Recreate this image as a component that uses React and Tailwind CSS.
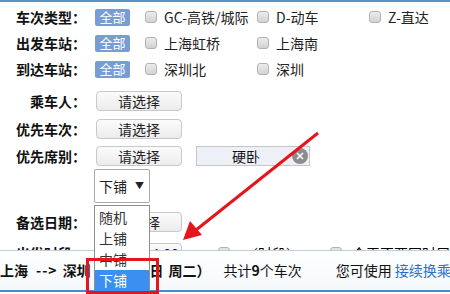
import React from 'react'

const font = { fontFamily: '"Noto Sans CJK SC", "Noto Sans", sans-serif' }

function Check({ label }) {
  return (
    <div className="flex items-center w-[112px] shrink-0">
      <span className="w-[12px] h-[12px] rounded-[3px] border border-[#b3b3b3] bg-gradient-to-b from-[#ececec] to-[#d2d2d2] shrink-0"></span>
      <span className="ml-[7px] text-[14px] text-[#222] whitespace-nowrap">{label}</span>
    </div>
  )
}

function Label({ children }) {
  return <div className="w-[86px] shrink-0 text-right text-[14px] font-bold text-[#111] whitespace-nowrap">{children}</div>
}

function PickBtn({ text = '请选择' }) {
  return (
    <div className="ml-[10px] w-[86px] h-[20px] rounded-[4px] border border-[#c8c8c8] bg-gradient-to-b from-[#fbfbfb] to-[#ececec] flex items-center justify-center text-[14px] text-[#222] shrink-0">
      {text}
    </div>
  )
}

export default function App() {
  const filterRows = [
    { label: '车次类型：', items: ['GC-高铁/城际', 'D-动车', 'Z-直达'] },
    { label: '出发车站：', items: ['上海虹桥', '上海南'] },
    { label: '到达车站：', items: ['深圳北', '深圳'] },
  ]
  const opts = ['随机', '上铺', '中铺', '下铺']

  return (
    <div className="relative w-[450px] h-[294px] overflow-hidden bg-white" style={font}>
      <div className="h-[2px] bg-[#5b93c8]"></div>
      <div className="pt-[2px]">
        {filterRows.map((r) => (
          <div key={r.label} className="flex items-center h-[26px]">
            <Label>{r.label}</Label>
            <span className="ml-[9px] w-[35px] h-[17px] rounded-[2px] bg-[#789dd5] text-white text-[13px] flex items-center justify-center shrink-0">全部</span>
            <div className="ml-[15px] flex items-center">
              {r.items.map((it) => <Check key={it} label={it} />)}
            </div>
          </div>
        ))}

        <div className="flex items-center h-[28px] mt-[5px]">
          <Label>乘车人：</Label>
          <PickBtn />
        </div>
        <div className="flex items-center h-[28px]">
          <Label>优先车次：</Label>
          <PickBtn />
        </div>
        <div className="flex items-center h-[26px]">
          <Label>优先席别：</Label>
          <PickBtn />
          <div className="relative ml-[14px] w-[114px] h-[20px] border border-[#c6c6c6] bg-[#eef0f7] flex items-center justify-center text-[14px] text-[#111]">
            <span className="mr-[14px]">硬卧</span>
            <span className="absolute right-[1px] top-[1px] w-[16px] h-[16px] rounded-full bg-[#8c8c8c] flex items-center justify-center">
              <svg width="8" height="8" viewBox="0 0 8 8"><path d="M1 1L7 7M7 1L1 7" stroke="#fff" strokeWidth="1.6" /></svg>
            </span>
          </div>
        </div>
        <div className="flex">
          <div className="ml-[94px] w-[56px] h-[34px] border border-[#a9a9a9] rounded-[2px] bg-white flex items-center pl-[4px] text-[14px] text-[#222]">
            下铺<span className="ml-[8px] text-[9px]">▼</span>
          </div>
        </div>
        <div className="flex items-center h-[28px] mt-[5px]">
          <Label>备选日期：</Label>
          <PickBtn />
        </div>
        <div className="flex items-center h-[28px] mt-[3px]">
          <Label>出发时段：</Label>
          <PickBtn text="00:00--24:00" />
          <span className="ml-[36px] w-[12px] h-[12px] rounded-[3px] border border-[#b3b3b3] bg-[#e2e2e2] shrink-0"></span>
          <span className="ml-[14px] text-[14px] whitespace-nowrap">（时段）</span>
          <span className="ml-[30px] w-[12px] h-[12px] rounded-[3px] border border-[#b3b3b3] bg-[#e2e2e2] shrink-0"></span>
          <span className="ml-[10px] text-[14px] whitespace-nowrap">今天不要同时展示</span>
        </div>
      </div>

      {/* bottom summary bar */}
      <div className="absolute left-0 top-[250px] w-[450px] h-[42px] border-t border-[#bcd0e3] border-b-2 border-b-[#4f8bc6] bg-gradient-to-b from-white to-[#f5f8fb] flex items-center text-[14px] text-[#111] whitespace-nowrap">
        <span className="font-bold">上海</span>
        <span className="font-bold ml-[8px] tracking-[1px]">--&gt;</span>
        <span className="font-bold ml-[5px]">深圳</span>
        <span className="font-bold ml-[6px]">（3月14日</span>
        <span className="font-bold ml-[5px]">周二）</span>
        <span className="ml-[13px]">共计<b>9</b>个车次</span>
        <span className="ml-[34px]">您可使用</span>
        <span className="text-[#2a6fc9] ml-[3px]">接续换乘</span>
      </div>

      {/* open dropdown list */}
      <div className="absolute left-[94px] top-[205px] w-[56px] h-[90px] border border-[#8f8f8f] bg-white pt-[1px]">
        {opts.map((o, i) => (
          <div key={o} className={(i === 3 ? 'bg-[#3a8ff0] text-white ' : 'text-[#333] ') + 'h-[21px] pl-[4px] flex items-center text-[14px]'}>{o}</div>
        ))}
      </div>

      {/* red highlight box */}
      <div className="absolute left-[86px] top-[258px] w-[73px] h-[36px] border-[3px] border-[#e4161d]"></div>

      {/* red arrow */}
      <svg className="absolute left-0 top-0 pointer-events-none" width="450" height="294" viewBox="0 0 450 294">
        <line x1="318" y1="133" x2="196" y2="230" stroke="#e8141b" strokeWidth="3" />
        <polygon points="183,240 190,221 202,235" fill="#e8141b" />
      </svg>
    </div>
  )
}
